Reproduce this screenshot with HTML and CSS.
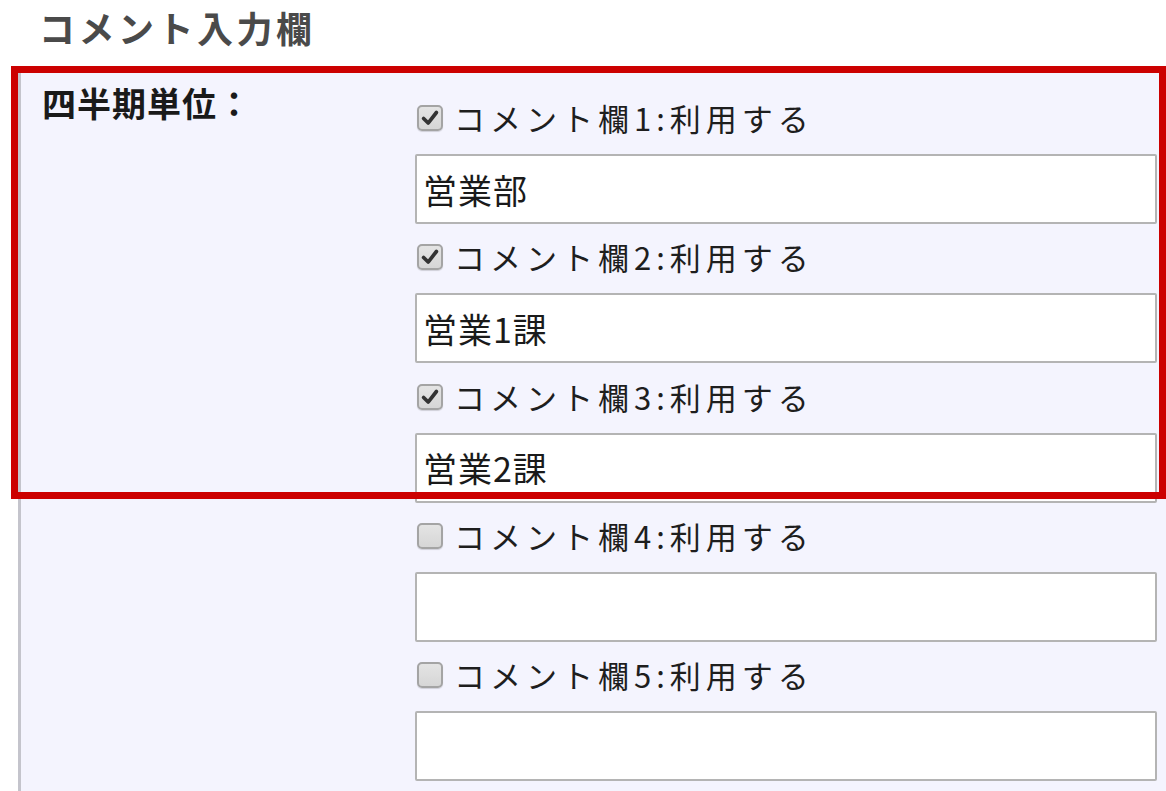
FILE: index.html
```html
<!DOCTYPE html>
<html lang="ja">
<head>
<meta charset="utf-8">
<link rel="stylesheet" href="styles.css">
</head>
<body>
<h2 class="title">コメント入力欄</h2>
<div class="panel">
  <div class="panel-label">四半期単位：</div>
  <div class="fields">
    <div class="field">
      <label class="use"><span class="cb checked"><svg viewBox="0 0 24 24"><path d="M5 12.5 L10 17.5 L19 6"/></svg></span><span class="use-text">コメント欄1:利用する</span></label>
      <input class="comment" type="text" value="営業部">
    </div>
    <div class="field">
      <label class="use"><span class="cb checked"><svg viewBox="0 0 24 24"><path d="M5 12.5 L10 17.5 L19 6"/></svg></span><span class="use-text">コメント欄2:利用する</span></label>
      <input class="comment" type="text" value="営業1課">
    </div>
    <div class="field">
      <label class="use"><span class="cb checked"><svg viewBox="0 0 24 24"><path d="M5 12.5 L10 17.5 L19 6"/></svg></span><span class="use-text">コメント欄3:利用する</span></label>
      <input class="comment" type="text" value="営業2課">
    </div>
    <div class="field">
      <label class="use"><span class="cb"></span><span class="use-text">コメント欄4:利用する</span></label>
      <input class="comment" type="text" value="">
    </div>
    <div class="field">
      <label class="use"><span class="cb"></span><span class="use-text">コメント欄5:利用する</span></label>
      <input class="comment" type="text" value="">
    </div>
  </div>
</div>
<div class="highlight"></div>
</body>
</html>
```
FILE: styles.css
```css
html, body {
  margin: 0;
  padding: 0;
  background: #ffffff;
  overflow: hidden;
}
body {
  width: 1166px;
  height: 791px;
  font-family: "Noto Sans CJK JP", "Noto Sans", sans-serif;
  color: #222;
  position: relative;
}
.title {
  margin: 0;
  height: 73px;
  box-sizing: border-box;
  padding: 3px 0 0 39px;
  font-size: 36px;
  line-height: 48px;
  font-weight: 700;
  color: #4a4a4a;
  letter-spacing: 3.5px;
}
.panel {
  margin-left: 18px;
  height: 718px;
  display: flex;
  background: #f4f4fe;
  border-left: 3px solid #c4c4cc;
}
.panel-label {
  width: 394px;
  flex: none;
  padding: 10px 0 0 21px;
  box-sizing: border-box;
  font-size: 34px;
  line-height: 40px;
  font-weight: 700;
  color: #1a1a1a;
  letter-spacing: 1px;
}
.fields {
  flex: 1;
  padding-top: 20px;
  display: flex;
  flex-direction: column;
}
.field {
  display: flex;
  flex-direction: column;
  margin-bottom: 8.25px;
}
.use {
  height: 50px;
  margin-bottom: 11px;
  display: flex;
  align-items: center;
}
.cb {
  width: 26px;
  height: 26px;
  margin-left: 2px;
  flex: none;
  box-sizing: border-box;
  border: 2px solid #a4a4a4;
  border-radius: 5px;
  background: linear-gradient(#e4e4e4, #d6d6d6);
  box-shadow: 0 1px 1px rgba(0,0,0,0.15);
  display: flex;
  align-items: center;
  justify-content: center;
}
.cb svg {
  width: 22px;
  height: 22px;
}
.cb svg path {
  fill: none;
  stroke: #333333;
  stroke-width: 4;
  stroke-linecap: round;
  stroke-linejoin: round;
}
.use-text {
  margin-left: 11px;
  font-size: 31px;
  line-height: 40px;
  letter-spacing: 5px;
  color: #1e1e1e;
}
.comment {
  display: block;
  width: 742px;
  height: 70px;
  margin: 0;
  box-sizing: border-box;
  border: 2px solid #b4b4b4;
  border-radius: 2px;
  background: #ffffff;
  padding: 0 6px;
  font-family: "Noto Sans CJK JP", "Noto Sans", sans-serif;
  font-size: 34px;
  letter-spacing: 1px;
  color: #1a1a1a;
  outline: none;
}
.highlight {
  position: absolute;
  left: 11px;
  top: 66px;
  width: 1155px;
  height: 433px;
  box-sizing: border-box;
  border: 7px solid #cc0000;
  pointer-events: none;
}
```
